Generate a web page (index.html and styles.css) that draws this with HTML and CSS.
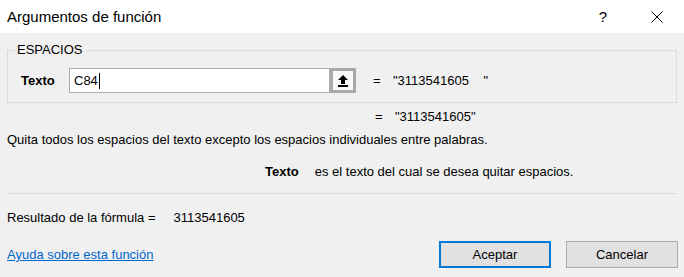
FILE: index.html
```html
<!DOCTYPE html>
<html lang="es">
<head>
  <meta charset="UTF-8" />
  <title>Argumentos de función</title>
  <link rel="stylesheet" href="styles.css">
</head>
<body>

<!-- Title bar -->
<div class="titlebar">
  <span class="title">Argumentos de función</span>
  <span class="help">?</span>
  <svg class="close" width="12" height="12" viewBox="0 0 12 12">
    <path d="M0.5 0.5 L11.5 11.5 M11.5 0.5 L0.5 11.5" stroke="#000" stroke-width="1" fill="none"/>
  </svg>
</div>

<!-- Dialog body -->
<div class="dialog">
  <fieldset class="group">
    <legend>ESPACIOS</legend>
    <div class="arg-row">
      <span class="arg-label">Texto</span>
      <div class="arg-input"><span class="typed">C84</span><span class="caret"></span></div>
      <button class="collapse" type="button">
        <svg width="10" height="12" viewBox="0 0 10 12">
          <path d="M5 0 L10 5 L7 5 L7 9 L3 9 L3 5 L0 5 Z" fill="#000"/>
          <rect x="0" y="10" width="10" height="2" fill="#000"/>
        </svg>
      </button>
      <span class="eq">=</span>
      <span class="value">"3113541605&nbsp;&nbsp;&nbsp;&nbsp;"</span>
    </div>
  </fieldset>

  <div class="result-row">
    <span class="eq">=</span>
    <span class="value">"3113541605"</span>
  </div>

  <p class="desc">Quita todos los espacios del texto excepto los espacios individuales entre palabras.</p>

  <div class="arg-help">
    <span class="arg-help-name">Texto</span>
    <span>es el texto del cual se desea quitar espacios.</span>
  </div>

  <div class="separator"></div>

  <div class="formula">
    <span>Resultado de la fórmula =</span>
    <span class="formula-value">3113541605</span>
  </div>

  <div class="footer">
    <a class="help-link" href="#">Ayuda sobre esta función</a>
    <div class="buttons">
      <button class="btn btn-default" type="button">Aceptar</button>
      <button class="btn" type="button">Cancelar</button>
    </div>
  </div>
</div>

</body>
</html>
```

FILE: styles.css
```css
body {
  margin: 0;
  padding: 0;
  font-family: "Liberation Sans", Arial, sans-serif;
  font-size: 13px;
  color: #000;
  background: #f0f0f0;
  width: 684px;
  height: 277px;
  overflow: hidden;
}
.titlebar {
  height: 33px;
  background: #fff;
  display: flex;
  align-items: center;
  padding-left: 7px;
}
.title {
  font-size: 15px;
  flex: 1;
}
.help {
  font-size: 15px;
  margin-right: 44px;
}
.close {
  margin-right: 21px;
}
.dialog {
  padding: 0 7px 0 7px;
}
.group {
  margin: 9px 0 0 0;
  padding: 0 0 9px 0;
  border: 1px solid #dcdcdc;
  min-width: 0;
}
.group legend {
  margin-left: 7px;
  padding: 0 2px;
  line-height: 16px;
  font-size: 13px;
}
.arg-row {
  display: flex;
  align-items: center;
  height: 25px;
  margin-top: 10px;
}
.arg-label {
  font-weight: bold;
  width: 48px;
  padding-left: 13px;
}
.arg-input {
  width: 255px;
  height: 23px;
  background: #fff;
  border: 1px solid #adadad;
  display: flex;
  align-items: center;
  padding-left: 4px;
}
.caret {
  display: inline-block;
  width: 1px;
  height: 16px;
  background: #000;
  margin-left: 1px;
}
.collapse {
  width: 26px;
  height: 25px;
  margin: 0;
  padding: 0;
  border: 3px solid #a9a9a9;
  background: #f8f8f8;
  display: flex;
  align-items: center;
  justify-content: center;
}
.eq {
  margin-left: 17px;
  width: 20px;
}
.result-row {
  display: flex;
  line-height: 16px;
  margin-top: 6px;
  padding-left: 368px;
}
.result-row .eq {
  margin-left: 0;
}
.desc {
  margin: 7px 0 0 0;
  line-height: 16px;
}
.arg-help {
  display: flex;
  gap: 16px;
  margin-top: 16px;
  line-height: 16px;
  padding-left: 258px;
}
.arg-help-name {
  font-weight: bold;
}
.separator {
  margin-top: 13px;
  height: 1px;
  background: #dadada;
}
.formula {
  display: flex;
  gap: 18px;
  margin-top: 16px;
  line-height: 16px;
}
.footer {
  display: flex;
  align-items: center;
  justify-content: space-between;
  margin-top: 15px;
}
.help-link {
  color: #0066cc;
  text-decoration: underline;
}
.buttons {
  display: flex;
  gap: 15px;
  margin-right: -1px;
}
.btn {
  width: 112px;
  height: 27px;
  margin: 0;
  font-family: "Liberation Sans", Arial, sans-serif;
  font-size: 13px;
  color: #000;
  background: #e1e1e1;
  border: 1px solid #adadad;
}
.btn-default {
  border: 2px solid #0078d7;
}
```
